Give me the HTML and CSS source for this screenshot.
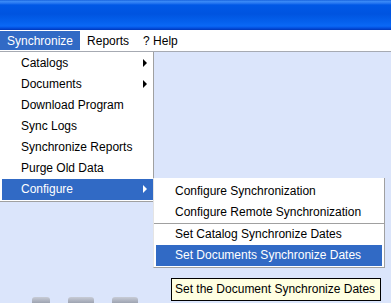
FILE: index.html
```html
<!DOCTYPE html>
<html lang="en">

<head>
    <meta charset="UTF-8">
    <title>Synchronize</title>
    <link rel="stylesheet" href="styles.css">
</head>

<body>
    <div class="window">
        <div class="titlebar"></div>

        <!-- Menu bar -->
        <div class="menubar">
            <span class="menu-title active">Synchronize</span>
            <span class="menu-title">Reports</span>
            <span class="menu-title">? Help</span>
        </div>

        <div class="content">
            <!-- Synchronize dropdown -->
            <ul class="dropdown">
                <li class="item has-sub">Catalogs</li>
                <li class="item has-sub">Documents</li>
                <li class="item">Download Program</li>
                <li class="item">Sync Logs</li>
                <li class="item">Synchronize Reports</li>
                <li class="item">Purge Old Data</li>
                <li class="item has-sub selected">Configure</li>
            </ul>

            <!-- Configure submenu -->
            <ul class="submenu">
                <li class="item">Configure Synchronization</li>
                <li class="item">Configure Remote Synchronization</li>
                <li class="separator"></li>
                <li class="item">Set Catalog Synchronize Dates</li>
                <li class="item selected">Set Documents Synchronize Dates</li>
            </ul>

            <div class="tooltip">Set the Document Synchronize Dates</div>

            <div class="buttons">
                <span class="btn small"></span>
                <span class="btn"></span>
                <span class="btn"></span>
            </div>
        </div>
    </div>
</body>

</html>
```

FILE: styles.css
```css
/* General Styles */
body {
    margin: 0;
    font-family: "Liberation Sans", Arial, sans-serif;
    font-size: 12px;
    color: #000;
}

.window {
    width: 391px;
    height: 303px;
    display: flex;
    flex-direction: column;
    background-color: #dbe5fb;
    overflow: hidden;
}

/* Title bar */
.titlebar {
    height: 30px;
    flex-shrink: 0;
    background: linear-gradient(to bottom,
            #0a54d6 0px, #3d8df7 1px, #2a7af2 3px, #0058e6 5px,
            #0054e0 14px, #0561ee 22px, #0a68f6 26px, #0350e0 28px, #0036b8 30px);
}

/* Menu bar */
.menubar {
    height: 21px;
    flex-shrink: 0;
    display: flex;
    align-items: stretch;
    background-color: #fff;
    border-bottom: 1px solid #a6aab2;
}

.menu-title {
    display: flex;
    align-items: center;
    padding: 0 7px;
    margin-top: 1px;
    margin-bottom: 1px;
}

.active {
    background-color: #316ac5;
    color: #fff;
}

/* Content area */
.content {
    position: relative;
    flex: 1;
    display: flex;
    flex-direction: column;
}

ul {
    list-style: none;
    margin: 0;
    padding: 0;
}

.item {
    height: 21px;
    line-height: 21px;
    white-space: nowrap;
    position: relative;
}

.item.selected {
    background-color: #316ac5;
    color: #fff;
}

.has-sub::after {
    content: "";
    position: absolute;
    right: 6px;
    top: 6px;
    border-left: 4px solid #000;
    border-top: 4px solid transparent;
    border-bottom: 4px solid transparent;
}

.has-sub.selected::after {
    border-left-color: #fff;
}

/* Dropdown menu */
.dropdown {
    position: absolute;
    left: 0;
    top: 0;
    width: 151px;
    padding: 1px 0 1px 2px;
    background-color: #fff;
    border-right: 1px solid #a0a0a0;
    border-bottom: 1px solid #a0a0a0;
}

.dropdown .item {
    padding-left: 19px;
}

/* Submenu */
.submenu {
    position: absolute;
    left: 153px;
    top: 126px;
    width: 226px;
    padding: 3px 2px 1px 2px;
    background-color: #fff;
    border-left: 1px solid #e4e4e4;
    border-right: 1px solid #a0a0a0;
    border-bottom: 1px solid #a0a0a0;
}

.submenu .item {
    padding-left: 19px;
}

.separator {
    height: 0;
    margin: 0 -2px;
    border-top: 1px solid #a0a0a0;
}

/* Tooltip */
.tooltip {
    position: absolute;
    left: 171px;
    top: 226px;
    padding: 3px 5px 4px 3px;
    line-height: 14px;
    background-color: #ffffe1;
    border: 1px solid #000;
    white-space: nowrap;
}

/* Buttons peeking at the bottom */
.buttons {
    margin-top: auto;
    display: flex;
    gap: 18px;
    padding-left: 32px;
    height: 6px;
}

.btn {
    width: 26px;
    background: linear-gradient(to bottom, #c8ccd6, #9ea4b2);
    border-radius: 3px 3px 0 0;
}

.btn.small {
    width: 18px;
}
```
